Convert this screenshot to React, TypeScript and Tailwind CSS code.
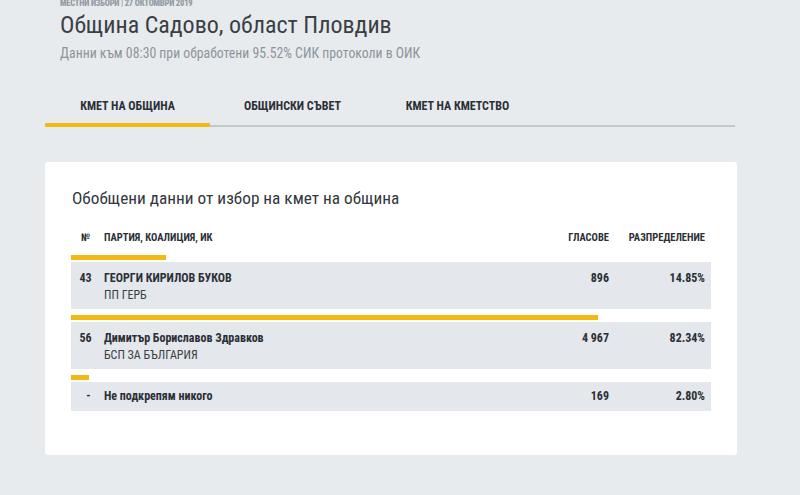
import React from "react";

const rows = [
  { n: "43", name: "ГЕОРГИ КИРИЛОВ БУКОВ", party: "ПП ГЕРБ", votes: "896", pct: 14.85 },
  { n: "56", name: "Димитър Бориславов Здравков", party: "БСП ЗА БЪЛГАРИЯ", votes: "4 967", pct: 82.34 },
  { n: "-", name: "Не подкрепям никого", party: "", votes: "169", pct: 2.8 },
];

export default function App() {
  return (
    <div className="w-[800px] h-[495px] overflow-hidden bg-[#e8ebee] font-['Roboto_Condensed','Roboto',sans-serif] text-[#2b3036]">
      <div className="pl-[60px]">
        <div className="text-[8.5px] font-black leading-[10px] mt-[-2px] mb-[1px] text-[#959ca3] tracking-[-0.2px]">МЕСТНИ ИЗБОРИ | 27 ОКТОМВРИ 2019</div>
        <h1 className="text-[24px] leading-[30px] mt-[2px] text-[#3a3f44] font-normal">Община Садово, област Пловдив</h1>
        <div className="text-[13.75px] leading-[16px] mt-[5px] text-[#8c949b]">Данни към 08:30 при обработени 95.52% СИК протоколи в ОИК</div>
      </div>

      <div className="ml-[45px] w-[690px] mt-[38px]">
        <div className="flex">
          {["КМЕТ НА ОБЩИНА", "ОБЩИНСКИ СЪВЕТ", "КМЕТ НА КМЕТСТВО"].map((t) => (
            <div key={t} className="w-[165px] text-center text-[12px] font-bold leading-[14px] text-[#2b3036]">{t}</div>
          ))}
        </div>
        <div className="flex items-end mt-[10px]">
          <div className="w-[165px] h-[4px] bg-[#f4b814] rounded-[1px]" />
          <div className="flex-1 h-[2px] bg-[#c3c8cd]" />
        </div>
      </div>

      <div className="ml-[45px] mt-[35px] w-[692px] h-[293px] bg-white rounded-[3px] px-[26px] pt-[27px]">
        <h2 className="text-[17.25px] leading-[20px] text-[#33383d] pl-[1px] mt-[-1px]">Обобщени данни от избор на кмет на община</h2>
        <div className="flex items-center mt-[23px] text-[10.5px] font-bold leading-[14px] text-[#2b3036]">
          <div className="w-[33px] text-center pr-[4px]">№</div>
          <div className="flex-1">ПАРТИЯ, КОАЛИЦИЯ, ИК</div>
          <div className="w-[80px] text-right">ГЛАСОВЕ</div>
          <div className="w-[102px] text-right pr-[6px]">РАЗПРЕДЕЛЕНИЕ</div>
        </div>
        <div className="mt-[10px] flex flex-col gap-[6px]">
          {rows.map((r) => (
            <div key={r.n}>
              <div className="h-[5px] bg-[#f4b814]" style={{ width: `${r.pct}%` }} />
              <div className={`mt-[2px] bg-[#e4e7eb] flex items-start text-[12px] leading-[17px] ${r.party ? "h-[47px] pt-[8px]" : "h-[29px] pt-[6px]"}`}>
                <div className={`w-[33px] text-center font-bold ${r.n === "-" ? "pl-[2px]" : "pr-[4px]"}`}>{r.n}</div>
                <div className="flex-1">
                  <div className="font-bold">{r.name}</div>
                  {r.party && <div className="text-[#3a3f44]">{r.party}</div>}
                </div>
                <div className="w-[80px] text-right font-bold">{r.votes}</div>
                <div className="w-[102px] text-right pr-[6px] font-bold">{r.pct.toFixed(2)}%</div>
              </div>
            </div>
          ))}
        </div>
      </div>
    </div>
  );
}
